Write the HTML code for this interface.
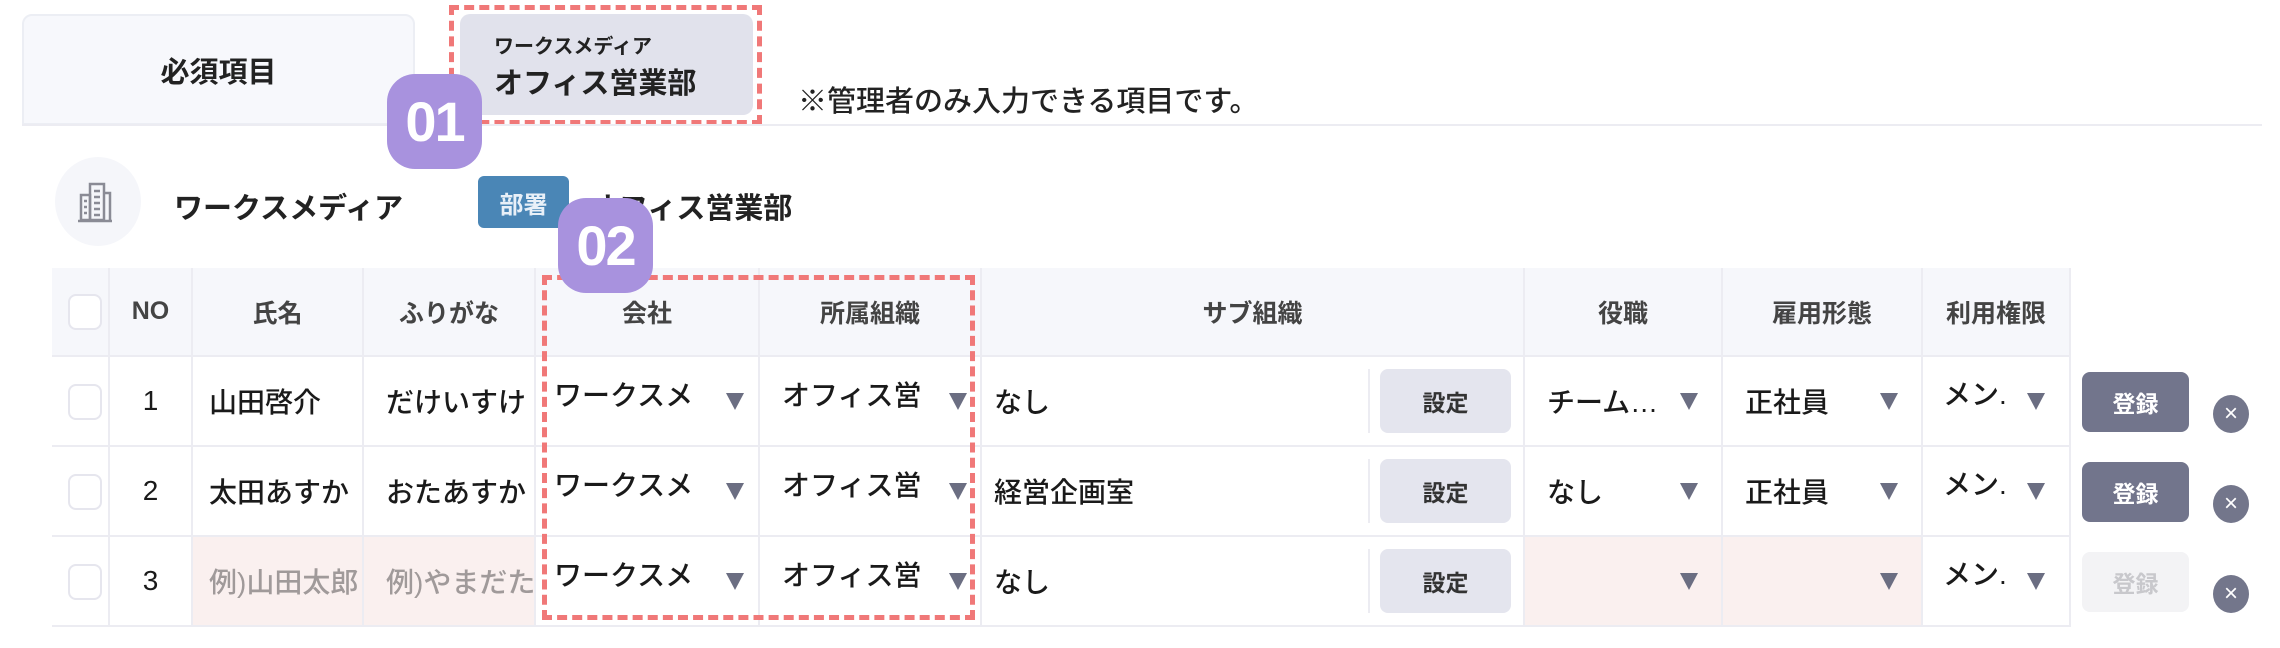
<!DOCTYPE html>
<html><head><meta charset="utf-8"><style>
*{margin:0;padding:0;box-sizing:border-box}
body{width:2280px;height:648px;background:#fff;position:relative;overflow:hidden;font-family:"Liberation Sans","Noto Sans CJK JP",sans-serif;color:#222}
.a{position:absolute}
.cell{position:absolute;border-right:2px solid #ececf2;border-bottom:2px solid #ececf2;overflow:hidden;white-space:nowrap;display:flex;align-items:center}
.h{background:#f6f7fb;justify-content:center;font-size:25px;font-weight:bold;color:#444}
.b{font-size:28px;font-weight:500;color:#1a1a1a}
.tri{position:absolute;width:0;height:0;border-left:9px solid transparent;border-right:9px solid transparent;border-top:17px solid #6b6e82}
.cb{position:absolute;left:16px;width:34px;height:36px;border:2px solid #e6e6ee;border-radius:8px;background:#fff}
.btn{position:absolute;border-radius:8px;display:flex;align-items:center;justify-content:center;font-size:23px;font-weight:bold}
.x{position:absolute;width:36px;height:38px;border-radius:50%;background:#73768b;color:#fff;font-size:24px;font-weight:300;display:flex;align-items:center;justify-content:center}
.badge{position:absolute;background:#a892de;color:#fff;font-weight:bold;font-size:56px;border-radius:28px;display:flex;align-items:center;justify-content:center;letter-spacing:-2px}
.dash{position:absolute;border:5px dashed #f07878}
</style></head><body>
<!-- tabs -->
<div class="a" style="left:22px;top:14px;width:393px;height:111px;background:#f7f8fc;border:2px solid #eceef4;border-radius:10px 10px 0 0;display:flex;align-items:center;justify-content:center;font-size:29px;font-weight:bold">必須項目</div>
<div class="a" style="left:460px;top:14px;width:293px;height:101px;background:#e1e2ec;border-radius:10px"></div>
<div class="a" style="left:494px;top:30px;font-size:20px;font-weight:bold">ワークスメディア</div>
<div class="a" style="left:494px;top:60px;font-size:29px;font-weight:bold">オフィス営業部</div>
<div class="dash" style="left:449px;top:5px;width:313px;height:120px"></div>
<div class="a" style="left:798px;top:78px;font-size:29px;font-weight:500">※管理者のみ入力できる項目です。</div>
<div class="a" style="left:22px;top:124px;width:2240px;height:2px;background:#ececf2"></div>
<div class="badge" style="left:387px;top:74px;width:95px;height:95px">01</div>
<!-- company row -->
<div class="a" style="left:55px;top:157px;width:86px;height:89px;border-radius:50%;background:#f5f6fa"></div>
<svg class="a" style="left:76px;top:181px" width="38" height="42" viewBox="0 0 38 42"><g fill="none" stroke="#8a8b95" stroke-width="2.5"><rect x="14" y="3" width="14" height="36"/><rect x="5" y="14" width="9" height="25"/><path d="M28 12h6v27M2 40h34M18 10h6M18 16h6M18 22h6M18 28h6M18 34h6M8 20h3M8 26h3M8 32h3"/></g></svg>
<div class="a" style="left:174px;top:185px;font-size:29px;font-weight:bold">ワークスメディア</div>
<div class="a" style="left:478px;top:176px;width:91px;height:52px;background:#4a86b6;border-radius:6px;color:#e8f0f8;font-size:24px;font-weight:bold;display:flex;align-items:center;justify-content:center">部署</div>
<div class="a" style="left:590px;top:185px;font-size:29px;font-weight:bold">オフィス営業部</div>
<!-- table -->
<div class="a" style="left:52px;top:268px;width:2019px;height:359px;border-left:2px solid #ececf2;border-top:2px solid #ececf2"></div>
<div id="t"></div>
<div class="dash" style="left:542px;top:275px;width:433px;height:345px"></div>
<div class="badge" style="left:558px;top:198px;width:95px;height:95px">02</div>
<script>
var cols=[52,110,193,364,536,760,982,1525,1723,1923,2071];
var rows=[268,357,447,537,627];
var H=["","NO","氏名","ふりがな","会社","所属組織","サブ組織","役職","雇用形態","利用権限"];
var D=[["1","山田啓介","だけいすけ","ワークスメ","オフィス営","なし","チーム…","正社員","メン.",1],
["2","太田あすか","おたあすか","ワークスメ","オフィス営","経営企画室","なし","正社員","メン.",1],
["3","例)山田太郎","例)やまだた","ワークスメ","オフィス営","なし","","","メン.",0]];
var s="";
for(var c=0;c<10;c++){var x=cols[c],w=cols[c+1]-x;
s+='<div class="cell h" style="left:'+x+'px;top:268px;width:'+w+'px;height:89px;">'+H[c]+'</div>';}
s+='<div class="cb" style="left:68px;top:294px"></div>';
for(var r=0;r<3;r++){var y=rows[r+1],d=D[r];
for(var c=0;c<10;c++){var x=cols[c],w=cols[c+1]-x,t="",st="",bg="#fff";
 if(c==1){t=d[0];st="justify-content:center";}
 else if(c==2){t=d[1];st="padding-left:16px";}
 else if(c==3){t=d[2];st="padding-left:22px";}
 else if(c==4){t=d[3];st="padding-left:18px;padding-bottom:14px";}
 else if(c==5){t=d[4];st="padding-left:22px;padding-bottom:14px";}
 else if(c==6){t=d[5];st="padding-left:12px";}
 else if(c==7){t=d[6];st="padding-left:22px";}
 else if(c==8){t=d[7];st="padding-left:22px";}
 else if(c==9){t=d[8];st="padding-left:20px;padding-bottom:16px";}
 if(r==2&&(c==2||c==3)){bg="#faf0ef";st+=";color:#a09a9a";}
 if(r==2&&(c==7||c==8))bg="#faf0ef";
 s+='<div class="cell b" style="left:'+x+'px;top:'+y+'px;width:'+w+'px;height:'+(rows[r+2]-y)+'px;background:'+bg+';'+st+'">'+t+'</div>';}
 s+='<div class="cb" style="left:68px;top:'+(y+27)+'px"></div>';
 [726,949,1680,1880,2027].forEach(function(tx){s+='<div class="tri" style="left:'+tx+'px;top:'+(y+36)+'px"></div>';});
 s+='<div class="a" style="left:1368px;top:'+(y+12)+'px;width:2px;height:64px;background:#ececf2"></div>';
 s+='<div class="btn" style="left:1380px;top:'+(y+12)+'px;width:131px;height:64px;background:#e4e5ee;color:#333">設定</div>';
 s+='<div class="btn" style="left:2082px;top:'+(y+15)+'px;width:107px;height:60px;background:'+(d[9]?'#72758c':'#f3f3f5')+';color:'+(d[9]?'#fff':'#c8c8cc')+'">登録</div>';
 s+='<div class="x" style="left:2213px;top:'+(y+38)+'px">×</div>';
}
document.getElementById("t").outerHTML=s;
</script>
</body></html>
